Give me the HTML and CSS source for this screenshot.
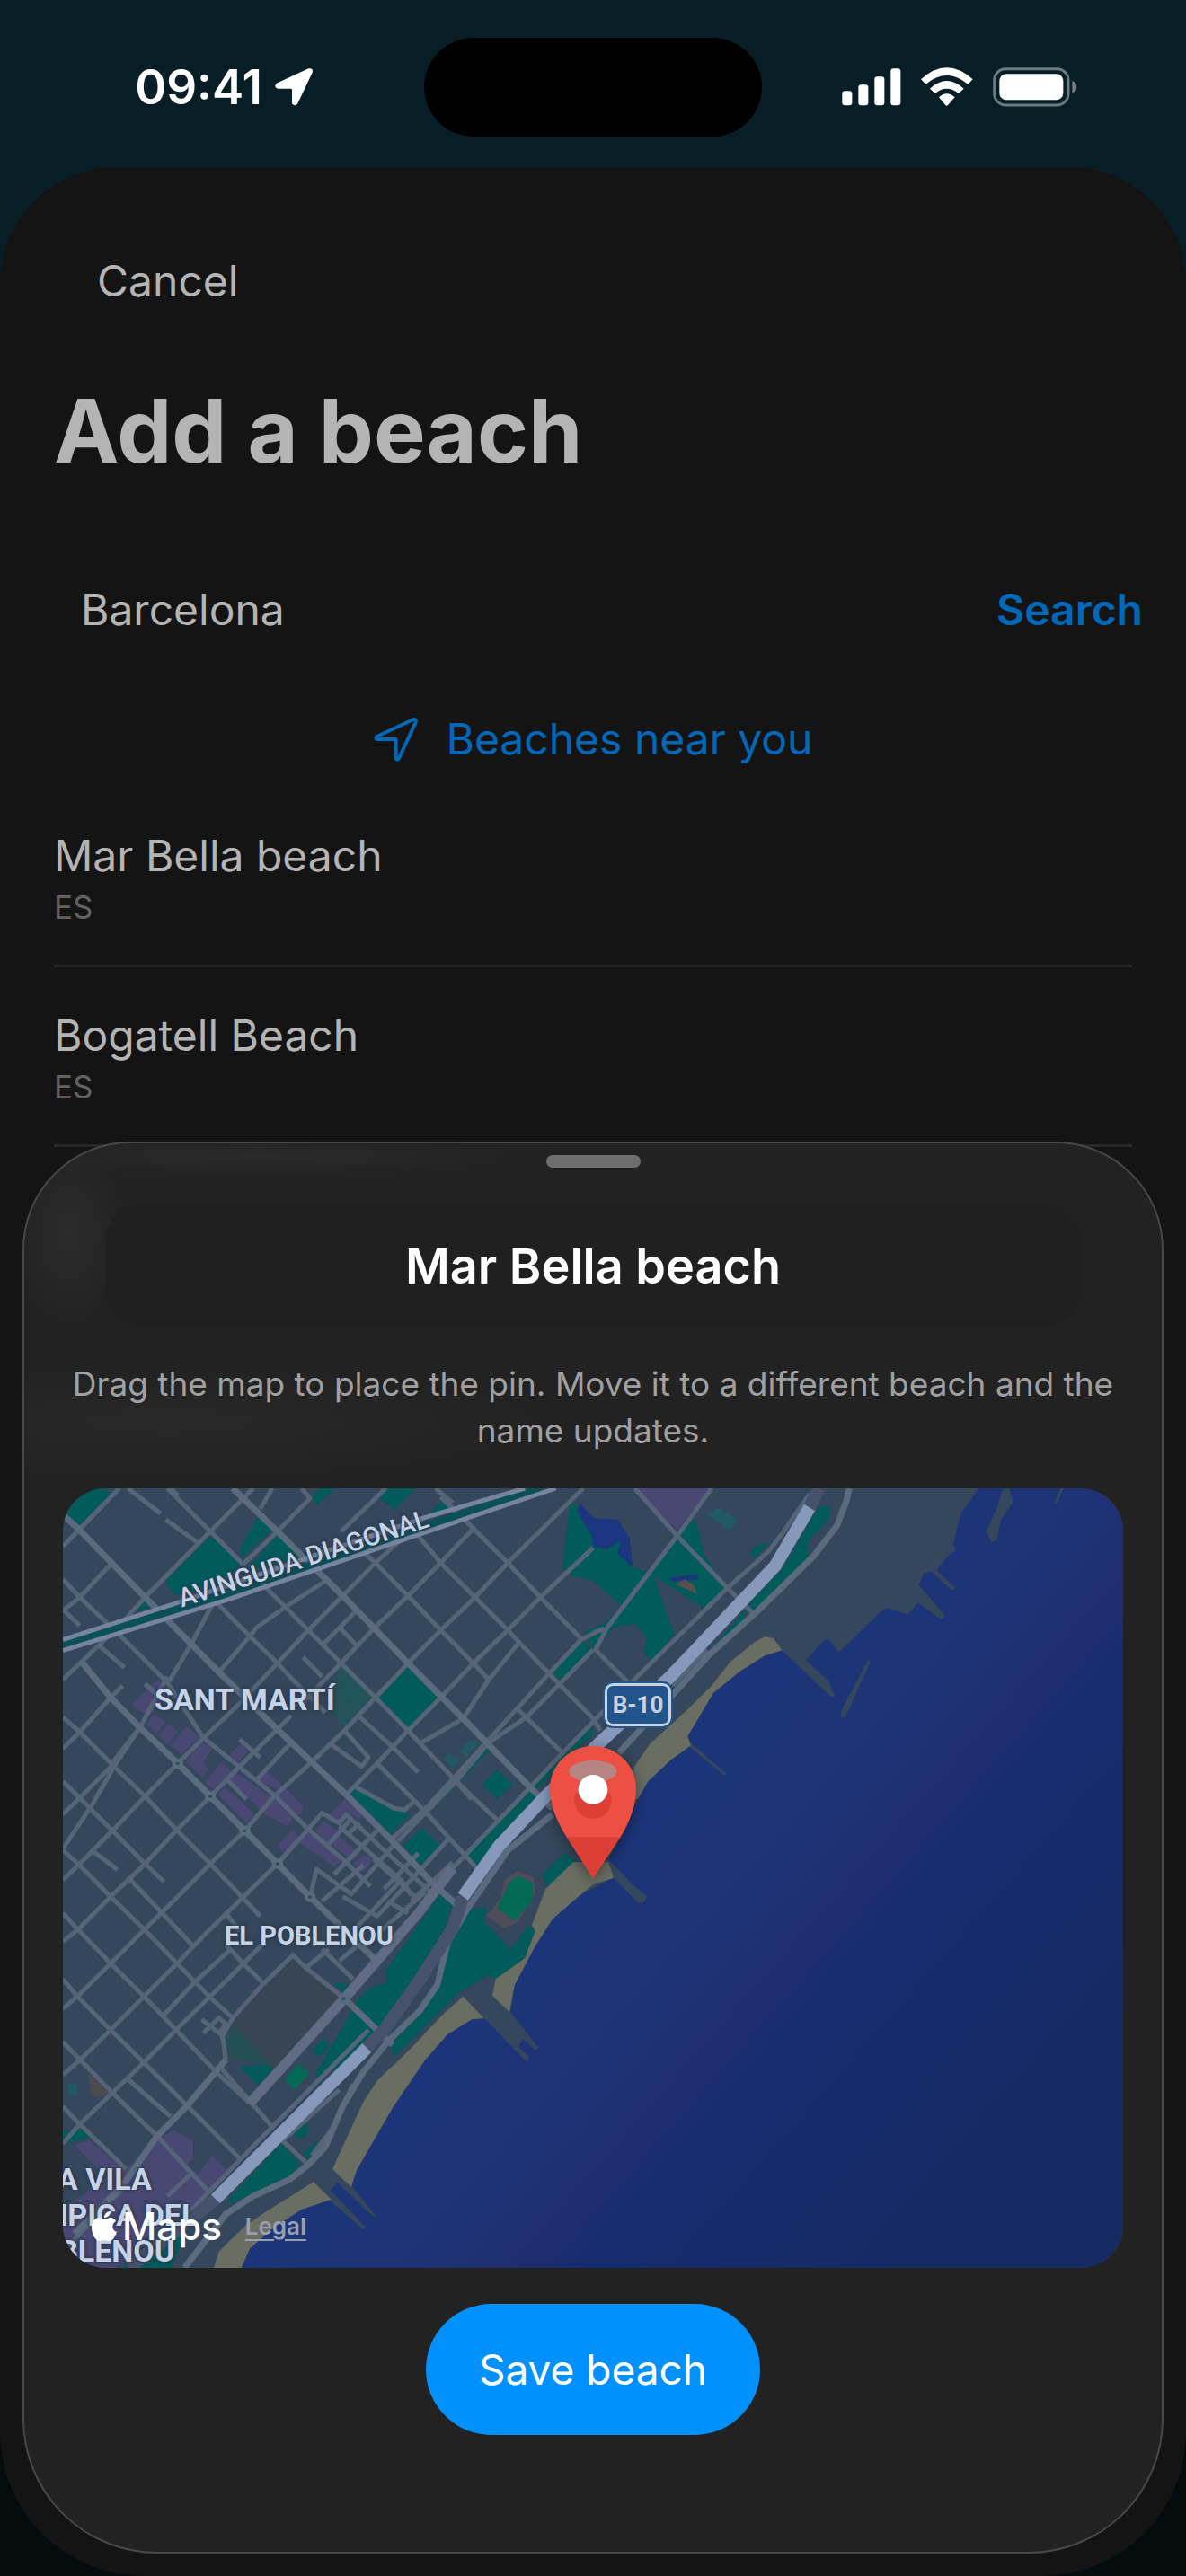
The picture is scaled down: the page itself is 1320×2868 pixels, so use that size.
FILE: index.html
```html
<!DOCTYPE html>
<html lang="en">
<head>
	<meta charset="utf-8" />
	<meta name="viewport" content="width=device-width, initial-scale=1" />
	<title>Add a beach</title>
	<link rel="stylesheet" href="styles.css">
</head>
<body>
<div class="screen">

	<header class="status-bar">
		<div class="status-left">
			<span class="time">09:41</span>
			<svg class="icon-location" viewBox="495 52 126 126" aria-hidden="true">
				<path d="M500 102 L607 53 Q624 50 620 66 L571 170 Q562 182 552 170 V124 Q552 120 547 120 H504 Q490 114 500 102Z" fill="#fff"/>
			</svg>
		</div>
		<div class="island"></div>
		<div class="status-right">
			<svg class="icon-status" viewBox="50 44 786 132" aria-hidden="true">
				<g fill="#fff">
					<rect x="51" y="123" width="33" height="48" rx="9"/>
					<rect x="105" y="102" width="33" height="69" rx="9"/>
					<rect x="159" y="75" width="33" height="96" rx="9"/>
					<rect x="213" y="48" width="33" height="123" rx="9"/>
					<path d="M314 84 Q400 6 487 84 L471 100 Q400 42 330 100Z"/>
					<path d="M344 115 Q400 63 457 115 L440 131 Q400 99 361 131Z"/>
					<path d="M374 144 Q400 120 427 144 L404 170 Q400 174 396 170Z"/>
					<rect x="576" y="66" width="213" height="87" rx="23"/>
				</g>
				<rect x="559" y="49" width="247" height="121" rx="38" fill="none" stroke="#6c7a81" stroke-width="9"/>
				<path d="M819 89 Q834 94 834 110 Q834 125 819 130Z" fill="#7c7c80"/>
			</svg>
		</div>
	</header>

	<main class="sheet">
		<button type="button" class="cancel">Cancel</button>
		<h1>Add a beach</h1>

		<form class="search">
			<input type="text" aria-label="Search for a beach" value="Barcelona">
			<button type="button">Search</button>
		</form>

		<button type="button" class="nearby">
			<svg class="icon-nearby" viewBox="55 57 147 147" aria-hidden="true">
				<path d="M65 120 L187 63 Q198 61 195 72 L138 195 Q132 199 129 193 V129 H66 Q59 126 65 120Z" fill="none" stroke="#0068b8" stroke-width="12" stroke-linejoin="round"/>
			</svg>
			Beaches near you
		</button>

		<ul class="results">
			<li><span class="name">Mar Bella beach</span><span class="country">ES</span></li>
			<li><span class="name">Bogatell Beach</span><span class="country">ES</span></li>
		</ul>
	</main>

	<section class="card">
		<div class="grabber"></div>
		<input type="text" class="beach-name" aria-label="Beach name" value="Mar Bella beach">
		<p class="hint">Drag the map to place the pin. Move it to a different beach and the name updates.</p>

		<div class="map">
			<svg class="map-art" viewBox="26 21 3084 2604" preserveAspectRatio="none" aria-hidden="true">
				<defs>
					<linearGradient id="sea" gradientUnits="userSpaceOnUse" x1="1590" y1="910" x2="2990" y2="1990">
						<stop offset="0" stop-color="#1c367c"/>
						<stop offset=".35" stop-color="#1d3375"/>
						<stop offset=".5" stop-color="#1f2d70"/>
						<stop offset=".57" stop-color="#152d70"/>
						<stop offset=".8" stop-color="#162b69"/>
						<stop offset="1" stop-color="#162a64"/>
					</linearGradient>
				</defs>
				<rect x="26" y="21" width="3084" height="2604" fill="url(#sea)"/>

				<!-- land and breakwaters -->
				<g fill="#35475c">
					<path d="M2690 21 2638 105 2630 140 2616 210 2623 228 2598 250 2568 295 2623 355 2613 363 2553 300 2530 305 2516 345 2593 448 2580 458 2513 403 2498 425 2483 442 2423 420 2403 435 2283 570 2258 530 2243 525 2188 595 2253 665 2273 718 2258 715 2118 562 2068 580 1998 630 1918 705 1843 850 1853 880 1798 925 1728 1000 1698 1060 1658 1160 1613 1260 1683 1345 1726 1385 1713 1406 1700 1406 1628 1322 1530 1380 1450 1460 1400 1550 1340 1680 1328 1770 1410 1890 1400 1898 1365 1860 1350 1885 1383 1920 1374 1936 1255 1795 1215 1795 1145 1845 1080 1930 985 2090 930 2200 880 2300 865 2350 937 2452 930 2455 825 2340 803 2365 908 2490 900 2497 800 2398 720 2430 640 2490 570 2560 545 2625 26 2625 26 21Z"/>
					<path d="M2755 35 2765 21 2780 21 2790 65 2755 125 2742 195 2728 200 2712 165 2742 90Z"/>
					<path d="M2928 21 2938 21 2916 75 2910 70Z"/>
					<path d="M2368 595 2375 600 2302 785 2290 785 2290 765Z"/>
					<path d="M1850 870 1957 975 1950 980 1846 882Z"/>
				</g>

				<!-- cemetery and school grounds -->
				<path d="M700 1590 840 1730 635 1960 500 1800Z" fill="#384654"/>
				<path d="M520 1815 635 1950 520 1925 500 1880Z" fill="#245055"/>
				<path d="M835 610 925 720 845 820 805 765 820 650Z" fill="#245259"/>
				<path d="M845 650 895 705 850 735Z" fill="#20575f"/>

				<!-- purple districts -->
				<g fill="#484873">
					<path d="M1688 21H1908L1813 160Z"/>
					<path d="M300 660 350 690 275 785 225 745Z"/>
					<path d="M290 775 325 800 300 840 270 810ZM335 805 362 835 330 875 305 845ZM385 815 425 850 370 910 340 880ZM425 865 460 890 435 935 450 960 430 985 385 935ZM545 875 565 900 535 935 510 910ZM485 935 520 970 460 1025 440 1005ZM530 970 640 1060 660 1030 595 1000 620 965 725 1080 720 1110 700 1110 680 1150 600 1100 590 1080 510 1000ZM500 1020 585 1110 560 1140 475 1040ZM695 1160 715 1190 670 1240 650 1215ZM735 1170 845 1255 815 1285 715 1205ZM785 1135 825 1165 800 1210 760 1165ZM845 1060 895 1110 890 1130 850 1100 830 1130 800 1110ZM825 1180 890 1240 870 1265 810 1215ZM900 1245 930 1260 900 1305 870 1275Z"/>
					<path d="M60 2215 105 2200 205 2300 290 2200 350 2165 405 2200 405 2260 385 2280 420 2310 460 2250 505 2300 390 2440 290 2500 180 2625H90L26 2530V2420L90 2380 140 2310Z"/>
				</g>

				<!-- parks -->
				<g fill="#005b5a">
					<path d="M26 21H145L165 40 70 150 26 120Z"/>
					<path d="M455 180 545 275 470 345 350 378 325 330Z"/>
					<path d="M595 110 635 160 540 260 545 215Z"/>
					<path d="M650 178 725 250 560 295Z"/>
					<path d="M775 21H818L765 75 748 50ZM975 21H1050L990 95 945 50ZM1125 65 1165 95 1080 120Z"/>
					<path d="M265 400 280 420 230 435Z"/>
					<path d="M1030 618 1117 720 1030 822 945 720Z"/>
					<path d="M870 1025 1035 1110 980 1175 860 1040ZM1070 1155 1125 1215 1070 1280 1015 1215ZM1290 960 1335 1010 1290 1060 1245 1010Z"/>
					<path d="M1535 525 1565 560 1475 665 1450 635ZM1245 885 1268 895 1105 1090 1085 1090ZM1385 1035 1410 1050 1230 1285 1195 1250ZM1568 840 1400 1030 1390 1015 1568 815Z"/>
					<path d="M1500 75 1525 80 1568 120 1650 200 1683 285 1725 300 1813 180 1863 125 1875 160 1890 240 1955 350 1895 425 1745 315 1805 510 1740 595 1715 570 1725 520 1690 475 1630 485 1570 560 1545 500 1605 470 1650 415 1568 330 1500 310 1480 285Z"/>
					<path d="M2223 85 2258 75 2253 125 2193 200 2193 260 2038 430 2020 410 2118 290ZM2020 415 1998 480 1910 560ZM2025 235 2045 210 2080 205 2040 255Z"/>
					<path d="M1840 640 1800 720 1795 690Z"/>
					<path d="M1125 1375 1160 1410 1130 1510 1060 1660 950 1820 870 1930 770 1990 760 1980 860 1780 890 1720 920 1690 970 1670 965 1630Z"/>
					<path d="M1200 1430 1260 1418 1250 1470 1330 1560 1380 1480 1400 1500 1370 1590 1300 1660 1260 1650 1180 1705 990 1920 980 1880 1065 1770 1115 1690 1145 1550Z"/>
					<path d="M1420 1310 1485 1240 1520 1265 1440 1360ZM540 1955 600 1945 640 1955 595 2015Z"/>
					<path d="M505 2400 660 2210 720 2280 680 2320 580 2375 515 2410ZM810 1670 860 1680 840 1705ZM780 1860 805 1880 775 1920 750 1900ZM735 2140 742 2170 715 2198 695 2175ZM770 2195 735 2265 725 2240Z"/>
					<path d="M26 2170 90 2160 105 2190 26 2210ZM380 2460 430 2410 440 2430 390 2500 340 2625H200L350 2530Z"/>
				</g>
				<path d="M710 1945 742 1975 700 2030 670 1995Z" fill="#006a54"/>
				<path d="M1345 1300 1395 1320 1400 1370 1350 1470 1310 1490 1258 1450 1300 1390 1310 1330Z" fill="#4e4d59"/>
				<path d="M1350 1315 1395 1340 1390 1400 1340 1465 1290 1425 1325 1335Z" fill="#006a54"/>
				<path d="M1210 860 1235 870 1200 920 1180 900ZM1150 905 1180 930 1160 960 1135 925ZM1930 85 1990 130 1965 160 1900 110ZM42 2010H68V2050H42Z" fill="#215a63"/>
				<path d="M100 1972 162 2040 150 2052H108Z" fill="#4b4b4e"/>

				<!-- ponds -->
				<path d="M1530 70 1568 120 1640 125 1675 190 1683 285 1640 240 1648 195 1610 225 1570 215 1565 180 1522 100Z" fill="#1c3580"/>
				<path d="M1785 322 1868 308 1875 325 1800 332Z" fill="#1c3580"/>
				<path d="M1808 342 1835 325 1862 345 1872 375Z" fill="#57514e"/>

				<!-- sand -->
				<g fill="#6a6d62">
					<path d="M2068 517 2093 522 2118 562 2068 580 1998 630 1918 705 1843 850 1853 880 1798 925 1728 1000 1698 1060 1680 1060 1688 950 1733 875 1838 765 1913 680 1968 600 2038 535Z"/>
					<path d="M1510 1270 1430 1360 1390 1480 1400 1500 1370 1590 1285 1660 1275 1715 1325 1770 1340 1680 1400 1550 1450 1460 1530 1380 1568 1345 1628 1322 1613 1270Z"/>
					<path d="M1190 1718 1250 1790 1215 1795 1145 1845 1080 1930 985 2090 930 2200 880 2300 865 2355 810 2295 860 2170 900 2070 940 2000 1040 1890 1130 1780Z"/>
					<path d="M755 2338 807 2396 720 2430 640 2490 570 2560 545 2625H465L480 2570 560 2480 640 2420Z"/>
				</g>

				<!-- side streets -->
				<g class="street">
					<path d="M26 215 190 21M26 430 75 385 165 275M175 500 265 385 455 165 580 21M26 660 190 480M335 665 400 540 465 400M480 635 570 515 590 485 670 420 790 330M550 275 650 165 745 55 720 21M540 740 650 605 740 495 840 380 935 270 1060 140M835 165 935 55 965 21"/>
					<path d="M720 740 835 605 930 490 1030 380 1125 270 1220 155 1175 100M555 1165 640 1050 750 935 845 830 935 720 1030 605 1125 495 1225 385 1320 270 1540 21M850 1045 940 940 1030 830 1125 720 1220 605 1320 495 1415 385 1568 220"/>
					<path d="M1000 1200 1170 1000 1265 870 1375 785 1475 670 1568 560M985 1190 1090 1080 1265 860 1440 640 1535 525 1600 490M1070 870 1190 790 1265 660 1350 540M785 540 875 435M830 485 880 545M725 585 780 650"/>
					<path d="M26 890 75 835 165 720 200 680M165 945 250 820 330 650M26 1225 110 1080 175 950 250 820M26 1110 75 1055 175 940M26 1330 75 1275 170 1165 265 1050 360 940 435 855 540 740M215 1330 265 1275 355 1165 455 1050 540 950 690 780M360 1385 455 1275 555 1165M110 1230 185 1295M585 1000 690 870"/>
					<path d="M330 21 455 165 550 275M215 21 310 105M325 125 415 200M360 45 340 21M600 90 635 21M26 325 75 385 190 510 330 670 435 855 500 915 640 1045 740 1160 840 1260 920 1350M26 425 75 480M130 545 205 620M265 675 330 740M470 400 570 515 650 605 690 655 790 770M610 345 740 495 835 605 935 720 1030 830 1170 1000 1290 1130"/>
					<path d="M1125 50 1220 155 1320 270 1415 385 1535 525M1110 21 1160 70M1060 180 1125 270 1225 385 1320 495 1440 640 1568 790 1590 830M900 235 935 270 1030 380 1125 495 1220 605 1265 660M885 780 985 885 1060 970M805 875 895 950 915 920 845 830M940 940 1080 1100 1150 1190 1230 1290M1350 760 1475 900M1170 1000 1215 1060M880 1020 990 1090 1020 1095 1045 1070"/>
					<path d="M26 785 75 835 175 950 265 1050 355 1160 455 1275 550 1390 600 1450M26 1000 75 1055 170 1165 265 1275 320 1335M540 860 600 920M500 990 560 1060M26 1230 70 1275 165 1385 263 1495 358 1608 453 1720 520 1790M215 1320 315 1440 405 1550M26 1440 70 1495 165 1608 262 1718 355 1830 480 1980 570 2075"/>
					<path d="M26 1660 68 1718 165 1830 262 1940 385 2080 545 2265M26 1870 76 1930 170 2040 300 2185 450 2370M26 2085 75 2145 210 2295M215 1995 340 2120M500 1545 550 1608 610 1675M695 1580 730 1620 845 1725M780 1560 870 1660M830 1600 900 1530M480 1950 640 2160M665 2200 740 2280M500 1440 540 1500"/>
					<path d="M26 1535 70 1495 165 1385 265 1275M26 1760 68 1718 165 1608 263 1495 360 1385M26 1980 76 1930 165 1830 262 1718 358 1608 453 1495 552 1385 650 1275M26 2210 75 2145 170 2040 262 1938 355 1830 453 1720 552 1608 610 1540M320 1780 410 1670 510 1565M735 1620 800 1560"/>
					<path d="M490 1850 430 1795M435 1840 480 1790 500 1810 480 1840M500 1930 490 1850 520 1790 610 1675 700 1575M330 2385 400 2310"/>
					<path d="M650 1275 740 1160 780 1105 830 1140 850 1110 960 1230 1110 1385M800 1210 860 1130M830 1150 1010 1330 1040 1380M760 1290 820 1340 870 1380M745 1386 765 1290M815 1310 940 1165M870 1370 990 1210M960 1360 1060 1240M780 1400 900 1280M840 1385 940 1450 1070 1290M860 1170 890 1140M930 1260 1050 1385M970 1400 1030 1440M870 1500 1010 1330M900 1550 1080 1370M1150 1190 1070 1290"/>
					<path d="M1690 21 1813 180 1960 355 2035 440M1913 21 1813 180 1610 485 1575 560 1675 675M1600 490 1568 505"/>
					<path d="M2198 40 2123 165 2080 230 1958 355 1683 665 1480 905 1385 1020 1160 1290"/>
					<path d="M1040 1400 1160 1270M915 1830 630 2160 540 2265 380 2455M830 2030 660 2205M26 2570 200 2360M870 2010 810 2160 750 2250M1900 560 1800 680"/>
				</g>

				<!-- wider streets -->
				<g class="avenue">
					<path d="M26 110 70 155 265 385 480 635 640 815 850 1045 985 1200 1110 1350 1200 1440M520 21 650 165 840 380 1030 605 1190 790 1385 1020 1450 1090"/>
					<path d="M80 600 165 720 250 820 360 940M360 940 455 1050 555 1165 650 1275 745 1386 840 1490 930 1590M845 1725 985 1880"/>
					<path d="M60 2510 200 2350 300 2185 390 2080 500 1930"/>
					<path d="M2313 21 2306 60 2278 145 2208 250 2038 440 1908 575 1643 905"/>
					<path d="M1450 1110 1320 1230 1200 1430 1145 1540 1115 1680 1065 1765 970 1870 900 1970 840 2085 790 2220 740 2280 685 2330 580 2385 500 2445 430 2550 380 2625"/>
				</g>
				<path class="boulevard" d="M570 2075 845 1725 1060 1440 1160 1290"/>
				<g class="roundabout">
					<circle cx="360" cy="940" r="11"/>
					<circle cx="455" cy="1050" r="11"/>
					<circle cx="555" cy="1165" r="11"/>
					<circle cx="650" cy="1275" r="11"/>
					<circle cx="745" cy="1386" r="11"/>
					<circle cx="843" cy="1725" r="11"/>
				</g>

				<!-- Diagonal, two carriageways with a green strip -->
				<path class="diagonal-green" d="M26 543 500 375 1100 140 1420 21"/>
				<path class="diagonal" d="M26 527 360 403 1080 118 1370 21M26 563 500 395 1100 160 1460 21"/>

				<!-- B-10, tunnels first -->
				<path class="tunnel" d="M2198 85 2225 21M1190 1385 1160 1490 1060 1670 960 1830 910 1890M470 2395 400 2460 220 2625"/>
				<path class="highway" d="M2198 85 2098 280 1793 650 1593 865 1430 1050 1295 1215 1190 1385M910 1890 470 2395"/>
			</svg>

			<span class="label road-label">AVINGUDA DIAGONAL</span>
			<span class="label sant-marti">SANT MARTÍ</span>
			<span class="label poblenou">EL POBLENOU</span>
			<span class="label vila">LA VILA<br>OLÍMPICA DEL<br>POBLENOU</span>
			<span class="shield">B-10</span>

			<div class="attribution">
				<svg class="icon-apple" viewBox="0 0 28 34" aria-hidden="true">
					<path d="M14 9 C17 9 18 7 21 7 C24 7 26 9 27 11 C22 14 22 21 28 23 C26 29 23 33 20 33 C18 33 17 32 14 32 C12 32 11 33 9 33 C4 33 0 25 0 18 C0 11 4 7 8 7 C11 7 12 9 14 9Z M14 7 C14 3 17 0 21 0 C21 4 18 7 14 7Z" fill="#fff"/>
				</svg>
				<span class="maps">Maps</span>
				<a href="#" class="legal">Legal</a>
			</div>

			<svg class="pin" viewBox="66 72 288 441" aria-hidden="true">
				<path d="M210 72 C290 72 354 136 354 215 C354 270 332 325 302 376 L210 513 L122 376 C90 325 66 270 66 215 C66 136 130 72 210 72Z" fill="#ee4f43"/>
				<path d="M122 376 H302 L210 513Z" fill="#dd3f36"/>
				<ellipse cx="210" cy="254" rx="62" ry="60" fill="#dd3f36"/>
				<path d="M154 230 Q160 196 163 190 H258 Q264 210 266 230Z" fill="#ee4f43"/>
				<ellipse cx="210" cy="156" rx="80" ry="36" fill="#b68583"/>
				<circle cx="210" cy="217" r="49" fill="#fff"/>
			</svg>
		</div>

		<button type="button" class="save">Save beach</button>
	</section>

</div>
</body>
</html>
```
FILE: styles.css
```css
* {
	box-sizing: border-box;
	font-family: Inter, "Liberation Sans", sans-serif;
}

body {
	margin: 0;
	background: #040c0e;
}

button, input {
	border: 0;
	padding: 0;
	margin: 0;
	background: none;
	color: inherit;
	font-size: 48px;
	line-height: 60px;
}

button {
	cursor: pointer;
}

.screen {
	position: relative;
	display: flex;
	flex-direction: column;
	min-height: 100vh;
	overflow: hidden;
	background: linear-gradient(#081e26 10%, #040c0e 90%);
}

/* status bar */
.status-bar {
	display: grid;
	grid-template-columns: 1fr 376px 1fr;
	align-items: center;
	padding: 42px 0 34px;
	color: #fff;
}

.status-left {
	display: flex;
	justify-content: flex-end;
	align-items: center;
	gap: 14px;
	padding-right: 124px;
}

.time {
	font-size: 53px;
	font-weight: 600;
	line-height: 60px;
}

.icon-location {
	width: 42px;
	height: 42px;
}

.island {
	height: 110px;
	border-radius: 55px;
	background: #000;
}

.status-right {
	display: flex;
	padding-left: 89px;
}

.icon-status {
	width: 262px;
	height: 44px;
}

/* add beach sheet */
.sheet {
	flex: 1;
	display: flex;
	flex-direction: column;
	padding: 97px 60px 0;
	border-radius: 130px 130px 160px 160px;
	background: #141414;
	color: #b4b4b4;
}

.cancel {
	align-self: flex-start;
	margin-left: 48px;
}

h1 {
	margin: 77px 0 109px;
	font-size: 97px;
	font-weight: 700;
	line-height: 120px;
}

.search {
	display: flex;
	justify-content: space-between;
	margin: 0 -12px 84px 30px;
}

.search input {
	flex: 1;
	min-width: 0;
}

.search button {
	color: #0068b8;
	font-weight: 600;
}

.nearby {
	display: flex;
	justify-content: center;
	align-items: center;
	gap: 32px;
	color: #0068b8;
}

.icon-nearby {
	width: 49px;
	height: 49px;
}

.results {
	list-style: none;
	margin: 24px 0 0;
	padding: 0;
}

.results li {
	display: flex;
	flex-direction: column;
	gap: 5px;
	padding: 46px 0 42px;
	border-bottom: 3px solid #282828;
}

.name {
	font-size: 48px;
	line-height: 60px;
}

.country {
	color: #626262;
	font-size: 35px;
	line-height: 44px;
}

/* pin card */
.card {
	position: absolute;
	left: 25px;
	right: 25px;
	bottom: 25px;
	display: flex;
	flex-direction: column;
	align-items: center;
	padding: 13px 43px 130px;
	border: 2px solid #48484a;
	border-radius: 120px 120px 150px 150px;
	background:
		radial-gradient(ellipse 60px 100px at 50px 100px, #2c2c2c, transparent),
		radial-gradient(ellipse 280px 24px at 260px 14px, #2b2b2b, transparent),
		radial-gradient(ellipse 420px 60px at 160px 310px, #282828, transparent),
		#222;
}

.grabber {
	width: 105px;
	height: 14px;
	border-radius: 7px;
	background: #6e6e6e;
}

.beach-name {
	align-self: stretch;
	margin: 41px 47px 37px;
	height: 137px;
	border-radius: 42px;
	background: #202020;
	color: #fff;
	font-size: 54px;
	font-weight: 600;
	text-align: center;
}

.hint {
	margin: 0 0 38px;
	color: #a0a0a2;
	font-size: 37px;
	line-height: 52px;
	text-align: center;
}

.save {
	margin-top: 40px;
	padding: 43px 59px;
	border-radius: 73px;
	background: #0091ff;
	color: #fff;
	font-size: 46px;
}

/* map */
.map {
	position: relative;
	align-self: stretch;
	aspect-ratio: 1180 / 868;
	border-radius: 48px;
	overflow: hidden;
	background: #35475c;
}

.map-art {
	display: block;
	width: 100%;
	height: 100%;
}

.map-art path, .map-art circle {
	vector-effect: non-scaling-stroke;
	stroke-linejoin: round;
}

.street, .avenue, .boulevard, .diagonal, .diagonal-green, .tunnel, .highway {
	fill: none;
}

.street { stroke: #566479; stroke-width: 5px; }
.avenue { stroke: #5c6a80; stroke-width: 7px; }
.boulevard { stroke: #5f6c83; stroke-width: 11px; }
.roundabout { fill: #175560; stroke: #5c6a80; stroke-width: 4px; }
.diagonal { stroke: #76849d; stroke-width: 5px; }
.diagonal-green { stroke: #0b5058; stroke-width: 9px; }
.tunnel { stroke: #46526b; stroke-width: 14px; }
.highway { stroke: #8799ba; stroke-width: 14px; }

.label {
	position: absolute;
	color: #c6d3e6;
	font-family: Roboto, sans-serif;
	font-size: 34px;
	font-weight: 700;
	line-height: 40px;
	white-space: nowrap;
	text-shadow: 0 0 4px #2b3a4d, 0 0 4px #2b3a4d;
}

.road-label {
	left: 122px;
	top: 58px;
	font-size: 29px;
	font-weight: 500;
	transform: rotate(-18deg);
}

.sant-marti {
	left: 102px;
	top: 215px;
}

.poblenou {
	left: 180px;
	top: 478px;
	font-size: 29px;
}

.vila {
	left: 37px;
	bottom: -1px;
	text-align: center;
	transform: translateX(-50%);
}

.shield {
	position: absolute;
	left: 603px;
	top: 217px;
	width: 74px;
	height: 48px;
	border: 3px solid #c8d2e2;
	border-radius: 9px;
	outline: 2px solid #22558c;
	background: #22558c;
	color: #c8d2e2;
	font-family: Roboto, sans-serif;
	font-size: 26px;
	font-weight: 700;
	line-height: 42px;
	text-align: center;
}

.attribution {
	position: absolute;
	left: 32px;
	bottom: 16px;
	display: flex;
	align-items: center;
	gap: 6px;
	color: #fff;
}

.icon-apple {
	width: 28px;
	height: 34px;
}

.maps {
	font-size: 42px;
	font-weight: 500;
	line-height: 60px;
}

.legal {
	margin-left: 20px;
	color: #9b9faf;
	font-size: 26px;
	font-weight: 600;
	line-height: 60px;
	text-underline-offset: 5px;
}

.pin {
	position: absolute;
	left: 50%;
	bottom: 50%;
	width: 96px;
	height: 147px;
	margin-left: -48px;
	filter: drop-shadow(0 4px 8px rgba(0,0,0,.4));
}
```
